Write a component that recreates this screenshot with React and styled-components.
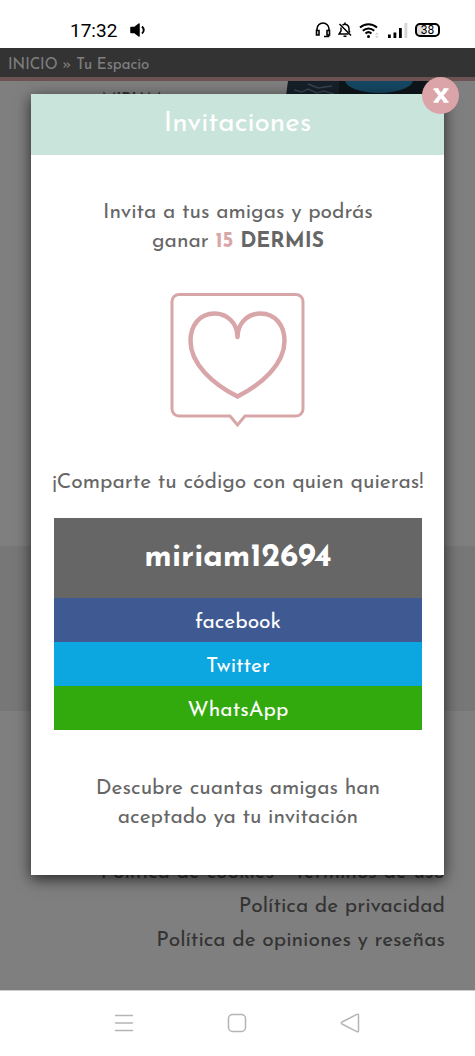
import React, { useState } from "react";
import styled, { createGlobalStyle, css } from "styled-components";

const shareLinks = [
  { name: "facebook", color: "#3f5a93", href: "#facebook" },
  { name: "Twitter", color: "#0ca6e1", href: "#twitter" },
  { name: "WhatsApp", color: "#32aa0d", href: "#whatsapp" },
];

const StatusBar = () => (
  <StyledStatusBar>
    <div className="status__group">
      <span className="status__time">17:32</span>
      <svg width="17" height="16" viewBox="0 0 17 16" aria-hidden="true">
        <path
          d="M1 5.500h3.500L9 2v12l-4.500-3.500H1z"
          fill="#000"
          stroke="#000"
          strokeWidth="1.500"
          strokeLinejoin="round"
        />
        <path
          d="M12 4.500q3.500 3.500 0 7"
          fill="none"
          stroke="#000"
          strokeWidth="1.800"
        />
      </svg>
    </div>

    <div className="status__icons">
      <svg width="16" height="16" viewBox="0 0 16 16" aria-hidden="true">
        <g fill="none" stroke="#000" strokeWidth="1.600">
          <path d="M2 9V7a6 6 0 0 1 12 0v2" />
          <path d="M1.500 8.500h2.500v4.500H1.500zM12 8.500h2.500v4.500H12z" />
          <path d="M13.500 13v1.500H9" />
        </g>
      </svg>
      <svg width="14" height="16" viewBox="0 0 14 16" aria-hidden="true">
        <g fill="none" stroke="#000" strokeWidth="1.500">
          <path d="M4.500 3.200A4 4 0 0 1 11 6.500V9l1 1.500M3 5.500V9L1 12h9.500" />
          <path d="M7 .5v2M5.500 14.300h3M1.500 2l11.500 11.500" />
        </g>
      </svg>
      <svg width="22" height="17" viewBox="0 0 22 17" aria-hidden="true">
        <g fill="none" stroke="#000" strokeWidth="2">
          <path d="M1 5.500a12.500 12.500 0 0 1 17 0" />
          <path d="M3.800 8.700a8.300 8.300 0 0 1 11.400 0" />
          <path d="M6.500 11.500a4.500 4.500 0 0 1 6 0" />
        </g>
        <circle cx="9.500" cy="14.500" r="1.500" />
        <path d="M16 12.500l1.800-2 1.800 2zM16 14l1.800 2 1.800-2z" fill="#ccc" />
      </svg>
      <svg width="20" height="16" viewBox="0 0 20 16" aria-hidden="true">
        <path d="M0 12.500h2.800V16H0zM5.500 10.500h2.800V16H5.500zM11 6h2.800v10H11z" />
        <path d="M16.500 1h2.800v15h-2.800z" fill="#d5d5d5" />
      </svg>
      <div className="status__battery">38</div>
    </div>
  </StyledStatusBar>
);

const HeartIcon = () => (
  <svg width="136" height="136" viewBox="0 0 136 136" aria-hidden="true">
    <g fill="none" stroke="#d8a5a8">
      <path
        strokeWidth="3"
        d="M9 2.500H126a7 7 0 0 1 7 7V117a7 7 0 0 1-7 7H75l-7.500 9L60 124H9a7 7 0 0 1-7-7V9.500a7 7 0 0 1 7-7z"
      />
      <path
        strokeWidth="4.500"
        strokeLinecap="round"
        d="M67.500 45C67.500 31 57 21.500 44.500 21.500C30 21.500 20.500 33 20.500 49C20.500 72 43 92 67.500 104.500C92 92 114.500 72 114.500 49C114.500 33 105 21.500 90.500 21.500C78 21.500 67.500 31 67.500 45"
      />
    </g>
  </svg>
);

const InvitationModal = ({ code, onClose }) => (
  <Overlay>
    <Modal role="dialog" aria-labelledby="invitations-title">
      <CloseButton type="button" aria-label="Cerrar" onClick={onClose}>
        <svg width="16" height="15" viewBox="0 0 16 15" aria-hidden="true">
          <path d="M3 1.500l10 12M13 1.500l-10 12" stroke="#fff" strokeWidth="4" />
          <path
            d="M.5 1.200h5M10.500 1.200h5M.5 13.800h5M10.500 13.800h5"
            stroke="#fff"
            strokeWidth="2"
          />
        </svg>
      </CloseButton>

      <ModalHeader id="invitations-title">Invitaciones</ModalHeader>

      <ModalBody>
        <Message>
          Invita a tus amigas y podrás
          <br />
          ganar <Points>15</Points> <strong>DERMIS</strong>
        </Message>
        <HeartIcon />
        <Message>¡Comparte tu código con quien quieras!</Message>

        <ShareBox>
          <Code>{code}</Code>
          {shareLinks.map(({ name, color, href }) => (
            <ShareLink key={name} href={href} $color={color}>
              {name}
            </ShareLink>
          ))}
        </ShareBox>

        <Message>
          Descubre cuantas amigas han
          <br />
          aceptado ya tu invitación
        </Message>
      </ModalBody>
    </Modal>
  </Overlay>
);

const App = () => {
  const [open, setOpen] = useState(true);

  return (
    <>
      <GlobalStyle />
      <Screen>
        <StatusBar />

        <Page>
          <Breadcrumb>
            <a href="#inicio">INICIO</a> » <a href="#espacio">Tu Espacio</a>
          </Breadcrumb>
          <Hero>
            <strong>MIRIAM</strong>
            <svg
              width="148"
              height="60"
              viewBox="0 0 148 60"
              aria-hidden="true"
            >
              <path d="M2 0H148V60H-6z" fill="#2c4052" />
              <path d="M53 0h95v60H53z" fill="#1c2a34" />
              <ellipse cx="93" cy="-1" rx="34" ry="13" fill="#2b8fc4" />
              <path
                d="M8 9l8 2 6-3 9 4 7-2 10 3M22 3l10 4 14-2"
                fill="none"
                stroke="#6f879b"
                strokeWidth="1.500"
              />
            </svg>
          </Hero>
          <Band />
          <Footer>
            <span>
              <a href="#cookies">Política de cookies</a> -{" "}
              <a href="#terminos">Términos de uso</a>
            </span>
            <a href="#privacidad">Política de privacidad</a>
            <a href="#opiniones">Política de opiniones y reseñas</a>
          </Footer>

          {open && (
            <InvitationModal
              code="miriam12694"
              onClose={() => setOpen(false)}
            />
          )}
        </Page>

        <SystemNav>
          <button type="button" aria-label="Recientes">
            <svg width="20" height="20" viewBox="0 0 20 20">
              <path d="M1 2.500h18M1 10h18M1 17.500h18" />
            </svg>
          </button>
          <button type="button" aria-label="Inicio">
            <svg width="20" height="20" viewBox="0 0 20 20">
              <rect x="1.500" y="1.500" width="17" height="17" rx="4" />
            </svg>
          </button>
          <button type="button" aria-label="Atrás">
            <svg width="20" height="20" viewBox="0 0 20 20">
              <path d="M17.300 1.200L2 9q-1.500 1 0 2l15.300 7.800q1.200.3 1.200-1V2.200q0-1.300-1.200-1z" />
            </svg>
          </button>
        </SystemNav>
      </Screen>
    </>
  );
};

export default App;

const GlobalStyle = createGlobalStyle`
  * {
    box-sizing: border-box;
  }

  body {
    margin: 0;
    font-family: "Josefin Sans", Lato, sans-serif;
    font-size: 21px;
    color: #666;
    background: #fff;
  }

  a {
    color: inherit;
    text-decoration: none;
  }

  strong {
    font-weight: 700;
  }
`;

const Screen = styled.div`
  display: flex;
  flex-direction: column;
  min-height: 100vh;
`;

const StyledStatusBar = styled.header`
  display: flex;
  align-items: center;
  justify-content: space-between;
  height: 48px;
  padding: 12px 35px 0 70px;
  color: #000;

  .status__group {
    display: flex;
    align-items: center;
    gap: 13px;
  }

  .status__time {
    font-family: Roboto, sans-serif;
    font-size: 19px;
    font-weight: 400;
  }

  .status__icons {
    display: flex;
    align-items: center;
    gap: 7px;
  }

  .status__battery {
    width: 25px;
    height: 14px;
    border: 2px solid #000;
    border-radius: 5px;
    background: linear-gradient(90deg, #ddd 38%, #fff 38%);
    font: 12px/11px Roboto, sans-serif;
    text-align: center;
  }
`;

const Page = styled.main`
  position: relative;
  flex: 1;
  display: flex;
  flex-direction: column;
  background: #fff;
`;

const Breadcrumb = styled.nav`
  height: 33px;
  padding-left: 8px;
  border-bottom: 4px solid #dba6a9;
  background: #666;
  color: #fff;
  font-size: 15px;
  line-height: 36px;
`;

const Hero = styled.section`
  display: flex;
  justify-content: space-between;
  height: 465px;
  padding: 0 41px 0 102px;

  strong {
    padding-top: 11px;
    font-size: 15px;
  }
`;

const Band = styled.section`
  height: 165px;
  background: #efefef;
`;

const Footer = styled.footer`
  flex: 1;
  display: flex;
  flex-direction: column;
  align-items: flex-end;
  justify-content: flex-end;
  padding: 0 30px 32px;
  line-height: 34px;
`;

const Overlay = styled.div`
  position: absolute;
  inset: 0;
  padding: 46px 31px;
  background: rgba(0, 0, 0, 0.5);
`;

const Modal = styled.section`
  position: relative;
  background: #fff;
  box-shadow: 0 4px 14px rgba(0, 0, 0, 0.7);
`;

const CloseButton = styled.button`
  position: absolute;
  top: -17px;
  right: -15px;
  display: flex;
  align-items: center;
  justify-content: center;
  width: 37px;
  height: 37px;
  padding: 0;
  border: 0;
  border-radius: 50%;
  background: #dba4a8;
  cursor: pointer;
`;

const ModalHeader = styled.h1`
  margin: 0;
  background: #c8e4db;
  color: #fff;
  font-size: 28px;
  font-weight: 400;
  line-height: 61px;
  text-align: center;
`;

const ModalBody = styled.div`
  display: flex;
  flex-direction: column;
  align-items: center;
  padding: 43px 22px 43px 23px;

  > svg {
    margin: 36px 0 40px;
  }
`;

const Message = styled.p`
  margin: 0;
  line-height: 29px;
  text-align: center;
  white-space: nowrap;
`;

const Points = styled.strong`
  color: #d8a5a8;
`;

const ShareBox = styled.div`
  align-self: stretch;
  margin: 21px 0 44px;
`;

const shareRow = css`
  display: block;
  color: #fff;
  text-align: center;
`;

const Code = styled.div`
  ${shareRow}
  background: #666;
  font-size: 32px;
  font-weight: 700;
  line-height: 80px;
`;

const ShareLink = styled.a`
  ${shareRow}
  padding: 5px 0 0;
  background: ${({ $color }) => $color};
  line-height: 39px;
`;

const SystemNav = styled.nav`
  display: flex;
  justify-content: center;
  gap: 93px;
  height: 66px;
  padding: 22px 2px 0 0;
  border-top: 1px solid #ccc;

  button {
    height: 20px;
    padding: 0;
    border: 0;
    background: none;
  }

  svg {
    display: block;
    fill: none;
    stroke: #b5b5b5;
    stroke-width: 1.5;
  }
`;
